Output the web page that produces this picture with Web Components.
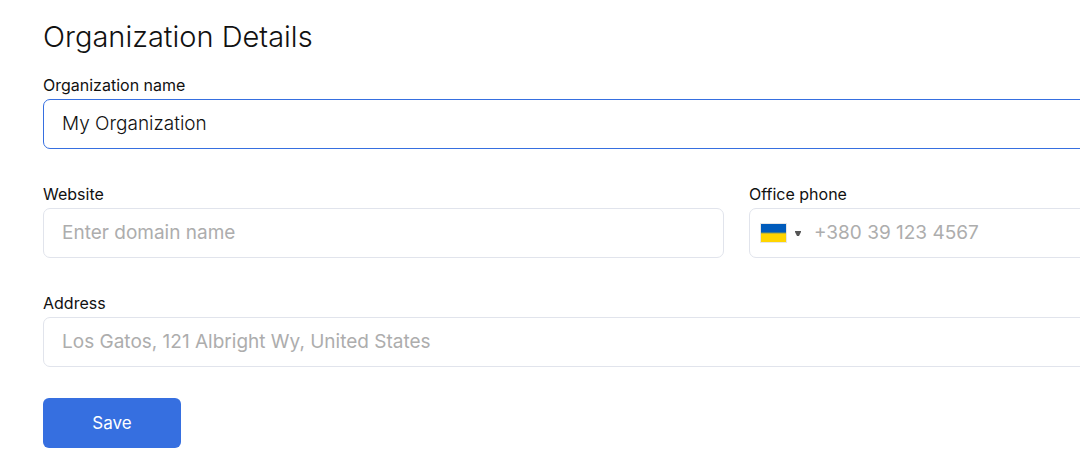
<!DOCTYPE html>
<html lang="en">
<head>
<meta charset="utf-8">
<meta name="viewport" content="width=device-width, initial-scale=1">
<title>Organization Details</title>
<style>
  body {
    margin: 0;
    background: #fff;
    color: #111;
    font-family: Inter, "Liberation Sans", sans-serif;
    overflow-x: hidden;
  }
</style>
</head>
<body>
<organization-form>
  <span slot="title">Organization Details</span>
  <text-field class="wide" label="Organization name" value="My Organization" active></text-field>
  <text-field label="Website" placeholder="Enter domain name"></text-field>
  <phone-field label="Office phone" placeholder="+380 39 123 4567"></phone-field>
  <text-field class="wide" label="Address" placeholder="Los Gatos, 121 Albright Wy, United States"></text-field>
  <save-button slot="actions">Save</save-button>
</organization-form>

<script>
const fieldStyles = `
  :host {
    display: block;
    min-width: 0;
  }

  label {
    display: block;
    margin-bottom: 4px;
    font-size: 16px;
    line-height: 20px;
  }

  .box {
    display: flex;
    align-items: center;
    box-sizing: border-box;
    height: 50px;
    border: 1px solid #e1e4ec;
    border-radius: 7px;
    background: #fff;
  }

  :host([active]) .box {
    border-color: #366fe0;
  }

  input {
    flex: 1;
    min-width: 0;
    height: 100%;
    box-sizing: border-box;
    padding: 0 18px 2px;
    border: 0;
    outline: 0;
    background: none;
    color: inherit;
    font-family: inherit;
    font-size: 19px;
    font-weight: 300;
  }

  input::placeholder {
    color: #adadad;
    font-weight: 400;
    opacity: 1;
  }
`;

class TextField extends HTMLElement {
  constructor() {
    super();
    this.root = this.attachShadow({ mode: "open" });
    this.root.innerHTML = `
      <style>${fieldStyles}</style>
      <label for="input"></label>
      <div class="box">
        <input id="input" type="text">
      </div>
    `;
  }

  connectedCallback() {
    const input = this.root.querySelector("input");
    this.root.querySelector("label").textContent = this.getAttribute("label");
    input.value = this.getAttribute("value") || "";
    input.placeholder = this.getAttribute("placeholder") || "";
  }
}

class PhoneField extends HTMLElement {
  constructor() {
    super();
    this.root = this.attachShadow({ mode: "open" });
    this.root.innerHTML = `
      <style>
        ${fieldStyles}

        button {
          display: flex;
          align-items: center;
          gap: 8px;
          height: 100%;
          padding: 0 0 0 10px;
          border: 0;
          background: none;
          cursor: pointer;
        }

        svg {
          display: block;
        }

        input {
          padding-left: 13px;
        }
      </style>
      <label for="input"></label>
      <div class="box">
        <button type="button" aria-label="Country code">
          <svg width="27" height="20" viewBox="0 0 27 20">
            <rect width="27" height="20" fill="#e6e6e6"/>
            <rect x="1" y="1" width="25" height="9" fill="#005bbb"/>
            <rect x="1" y="10" width="25" height="9" fill="#ffd500"/>
            <rect x="1" y="9" width="25" height="1" fill="#3f7d8c"/>
            <rect x="1" y="10" width="25" height="1" fill="#c9b52c"/>
          </svg>
          <svg width="6" height="5" viewBox="0 0 6 5">
            <path d="M0 0h6v1L4 5H2L0 1z" fill="#555"/>
          </svg>
        </button>
        <input id="input" type="tel">
      </div>
    `;
  }

  connectedCallback() {
    this.root.querySelector("label").textContent = this.getAttribute("label");
    this.root.querySelector("input").placeholder = this.getAttribute("placeholder") || "";
  }
}

class SaveButton extends HTMLElement {
  constructor() {
    super();
    this.root = this.attachShadow({ mode: "open" });
    this.root.innerHTML = `
      <style>
        :host {
          display: inline-block;
        }

        button {
          display: block;
          min-width: 138px;
          height: 50px;
          padding: 0 24px;
          border: 0;
          border-radius: 6px;
          background: #366fe0;
          color: #fff;
          font-family: inherit;
          font-size: 17px;
          cursor: pointer;
        }
      </style>
      <button type="button"><slot></slot></button>
    `;
  }
}

class OrganizationForm extends HTMLElement {
  constructor() {
    super();
    this.root = this.attachShadow({ mode: "open" });
    this.root.innerHTML = `
      <style>
        /* the form is wider than the window and runs past its right edge */
        :host {
          display: block;
          box-sizing: border-box;
          width: calc(100% + 393px);
          padding: 17px 43px 23px;
        }

        h1 {
          margin: 0 0 18px;
          font-size: 29px;
          font-weight: 300;
          line-height: 40px;
        }

        .fields {
          display: grid;
          grid-template-columns: 1fr 1fr;
          gap: 35px 25px;
        }

        ::slotted(.wide) {
          grid-column: 1 / -1;
        }

        .actions {
          display: flex;
          margin-top: 31px;
        }
      </style>
      <h1><slot name="title"></slot></h1>
      <div class="fields"><slot></slot></div>
      <div class="actions"><slot name="actions"></slot></div>
    `;
  }
}

customElements.define("text-field", TextField);
customElements.define("phone-field", PhoneField);
customElements.define("save-button", SaveButton);
customElements.define("organization-form", OrganizationForm);
</script>
</body>
</html>
